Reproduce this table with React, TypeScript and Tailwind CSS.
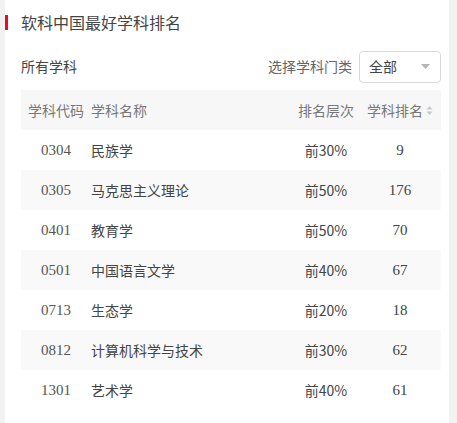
import React from "react";

const rows = [
  { code: "0304", name: "民族学", level: "前30%", rank: "9" },
  { code: "0305", name: "马克思主义理论", level: "前50%", rank: "176" },
  { code: "0401", name: "教育学", level: "前50%", rank: "70" },
  { code: "0501", name: "中国语言文学", level: "前40%", rank: "67" },
  { code: "0713", name: "生态学", level: "前20%", rank: "18" },
  { code: "0812", name: "计算机科学与技术", level: "前30%", rank: "62" },
  { code: "1301", name: "艺术学", level: "前40%", rank: "61" },
];

const cjk = "font-['Microsoft_YaHei','Noto_Sans_CJK_SC',sans-serif]";
const num = "font-['Liberation_Serif','Noto_Sans_CJK_SC',serif]";

function SortIcon() {
  return (
    <svg width="7" height="11" viewBox="0 0 7 11" className="ml-[3px]">
      <path d="M3.5 1 L6.5 4.5 L0.5 4.5 Z" fill="#c8c8c8" />
      <path d="M3.5 10 L6.5 6.5 L0.5 6.5 Z" fill="#c8c8c8" />
    </svg>
  );
}

export default function App() {
  return (
    <div className={`min-h-[423px] w-[457px] bg-[#f2f2f2] ${cjk}`}>
      <div className="ml-[5px] w-[444px] min-h-[423px] bg-white">
        {/* Title */}
        <div className="flex h-[43px] items-center">
          <div className="mt-[1px] h-[15px] w-[3px] bg-[#ea0a2a]" />
          <h1 className="ml-[13px] text-[16px] leading-none text-[#444]">
            软科中国最好学科排名
          </h1>
        </div>

        {/* Filter row */}
        <div className="flex h-[47px] items-center justify-between pl-[16px] pr-[8px]">
          <span className="text-[14px] text-[#444]">所有学科</span>
          <div className="flex items-center">
            <span className="mr-[7px] text-[14px] text-[#666]">选择学科门类</span>
            <div className="flex h-[32px] w-[82px] items-center justify-between rounded-[4px] border border-[#d9d9d9] pl-[9px] pr-[10px]">
              <span className="text-[14px] text-[#444]">全部</span>
              <svg width="9" height="5" viewBox="0 0 9 5">
                <path d="M0 0 L9 0 L4.5 5 Z" fill="#b5b5b5" />
              </svg>
            </div>
          </div>
        </div>

        {/* Table */}
        <div className="pl-[16px] pr-[8px]">
          <div className="flex h-[40px] items-center bg-[#f7f7f7] text-[14px] text-[#777]">
            <div className="w-[70px] text-center">学科代码</div>
            <div className="w-[202px]">学科名称</div>
            <div className="w-[66px] text-center">排名层次</div>
            <div className="flex w-[82px] items-center justify-center">
              学科排名
              <SortIcon />
            </div>
          </div>
          {rows.map((r, i) => (
            <div
              key={r.code}
              className={`flex h-[40px] items-center text-[14px] text-[#444] ${
                i % 2 === 1 ? "bg-[#f9f9f9]" : "bg-white"
              }`}
            >
              <div className={`w-[70px] text-center text-[15px] text-[#555] ${num}`}>{r.code}</div>
              <div className="w-[202px]">{r.name}</div>
              <div className="w-[66px] text-center">{r.level}</div>
              <div className={`w-[82px] text-center text-[15px] text-[#444] ${num}`}>{r.rank}</div>
            </div>
          ))}
        </div>
      </div>
    </div>
  );
}
